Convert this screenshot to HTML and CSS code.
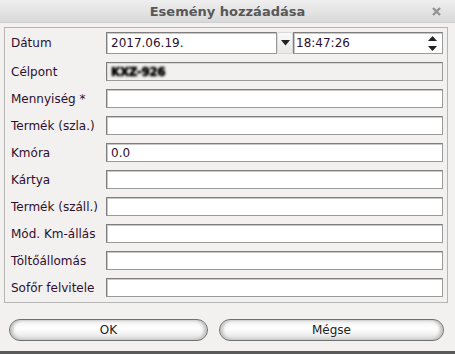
FILE: index.html
```html
<!doctype html>
<html lang="hu">
<head>
<meta charset="UTF-8">
<title>Esemény hozzáadása</title>
<link rel="stylesheet" href="styles.css">
</head>
<body>
	<div class="window">
		<div class="titlebar">
			<span class="title">Esemény hozzáadása</span>
			<svg class="close" width="9" height="9" viewBox="0 0 9 9"><path d="M1 1 L8 8 M8 1 L1 8" stroke="#939393" stroke-width="2.4"/></svg>
		</div>

		<div class="frame">
			<div class="row row-date">
				<label>Dátum</label>
				<div class="date-box">
					<span class="field date">2017.06.19.</span>
					<span class="drop"><svg width="9" height="6" viewBox="0 0 9 6"><path d="M0 0 H9 L4.5 5.5 Z" fill="#222"/></svg></span>
					<span class="field time">18:47:26
						<svg class="spin" width="9" height="15" viewBox="0 0 9 15"><path d="M4.5 0 L9 5 H0 Z M0 10 H9 L4.5 15 Z" fill="#222"/></svg>
					</span>
				</div>
			</div>
			<div class="row">
				<label>Célpont</label>
				<span class="field disabled"><span class="blurred">KXZ-926</span></span>
			</div>
			<div class="row">
				<label>Mennyiség *</label>
				<span class="field"></span>
			</div>
			<div class="row">
				<label>Termék (szla.)</label>
				<span class="field"></span>
			</div>
			<div class="row">
				<label>Kmóra</label>
				<span class="field">0.0</span>
			</div>
			<div class="row">
				<label>Kártya</label>
				<span class="field"></span>
			</div>
			<div class="row">
				<label>Termék (száll.)</label>
				<span class="field"></span>
			</div>
			<div class="row">
				<label>Mód. Km-állás</label>
				<span class="field"></span>
			</div>
			<div class="row">
				<label>Töltőállomás</label>
				<span class="field"></span>
			</div>
			<div class="row">
				<label>Sofőr felvitele</label>
				<span class="field"></span>
			</div>
		</div>

		<div class="buttons">
			<button class="btn btn-ok">OK</button>
			<button class="btn btn-cancel">Mégse</button>
		</div>
	</div>
</body>
</html>
```

FILE: styles.css
```css
*{
	margin:0;
	padding:0;
	box-sizing:border-box;
}
html, body{
	width:455px;
	height:354px;
	overflow:hidden;
}
body{
	background-color:#f2f1f0;
	font-family:"DejaVu Sans", sans-serif;
	font-size:12px;
	color:#2e0f2e;
}

.window{
	height:354px;
	display:flex;
	flex-direction:column;
	border-bottom:3px solid #5a5a5a;
}

.titlebar{
	height:23px;
	display:flex;
	align-items:center;
	justify-content:center;
	position:relative;
	background:linear-gradient(#efefef, #d9d9d9);
	border-bottom:1px solid #d0d0d0;
}
.title{
	font-weight:bold;
	font-size:13px;
	color:#585858;
}
.close{
	position:absolute;
	right:14px;
	top:7px;
}

.frame{
	margin:4px 7px 0 4px;
	border:1px solid #b5b5b5;
	padding:4px 4px 5px 5px;
	display:flex;
	flex-direction:column;
	gap:8px;
}

.row{
	display:flex;
	align-items:center;
	height:19px;
}
.row-date{
	height:22px;
}
.row label{
	width:96px;
	flex:none;
	padding-left:1px;
}

.field{
	flex:1;
	height:100%;
	display:flex;
	align-items:center;
	padding-left:4px;
	background:#fff;
	border:1px solid #7e7e7e;
	border-right-color:#9a9a9a;
	border-bottom-color:#9a9a9a;
	box-shadow:inset 1px 1px 0 #c8c8c8;
	color:#2e0f2e;
}
.field.disabled{
	background:#f2f1f0;
	box-shadow:inset 1px 1px 0 #d6d6d6;
}
.blurred{
	color:#000;
	font-weight:bold;
	filter:blur(1px);
	text-shadow:0 0 2px #000;
	letter-spacing:-0.4px;
}

.date-box{
	flex:1;
	height:100%;
	display:flex;
}
.date{
	flex:none;
	width:171px;
}
.drop{
	width:16px;
	display:flex;
	align-items:center;
	justify-content:center;
	background:linear-gradient(#fafafa, #e8e8e8);
	border:1px solid #d8d8d8;
	border-radius:2px;
}
.time{
	padding-left:2px;
	justify-content:space-between;
	padding-right:5px;
}

.buttons{
	display:flex;
	gap:11px;
	padding:16px 11px 0 9px;
}
.btn{
	height:22px;
	font-family:"DejaVu Sans", sans-serif;
	font-size:12px;
	color:#222;
	border:1px solid #707070;
	border-radius:11px;
	background:linear-gradient(#f0f0f0 0%, #ffffff 40%, #f2f2f2 70%, #d6d6d6 100%);
	box-shadow:inset 3px 0 3px #c4c4c4, inset -3px 0 3px #c4c4c4;
}
.btn-ok{
	width:199px;
}
.btn-cancel{
	flex:1;
}
```
